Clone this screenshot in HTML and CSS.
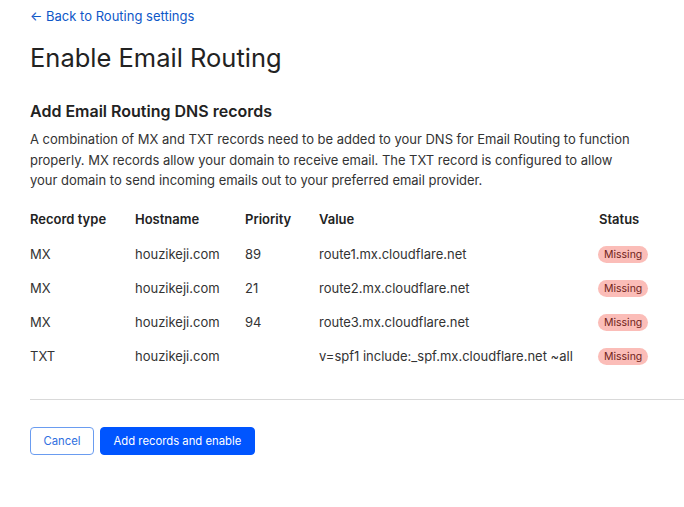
FILE: index.html
```html
<!DOCTYPE html>
<html lang="en">
<head>
<meta charset="utf-8">
<title>Enable Email Routing</title>
<link rel="stylesheet" href="styles.css">
</head>
<body>
<main class="page">
  <a class="back" href="#"><span class="arrow">←</span> Back to Routing settings</a>
  <h1 class="title">Enable Email Routing</h1>
  <h2 class="subtitle">Add Email Routing DNS records</h2>
  <p class="desc">A combination of MX and TXT records need to be added to your DNS for Email Routing to function properly. MX records allow your domain to receive email. The TXT record is configured to allow your domain to send incoming emails out to your preferred email provider.</p>
  <table class="records">
    <thead>
      <tr><th class="c-type">Record type</th><th class="c-host">Hostname</th><th class="c-prio">Priority</th><th class="c-val">Value</th><th class="c-status">Status</th></tr>
    </thead>
    <tbody>
      <tr><td>MX</td><td>houzikeji.com</td><td>89</td><td>route1.mx.cloudflare.net</td><td><span class="badge">Missing</span></td></tr>
      <tr><td>MX</td><td>houzikeji.com</td><td>21</td><td>route2.mx.cloudflare.net</td><td><span class="badge">Missing</span></td></tr>
      <tr><td>MX</td><td>houzikeji.com</td><td>94</td><td>route3.mx.cloudflare.net</td><td><span class="badge">Missing</span></td></tr>
      <tr><td>TXT</td><td>houzikeji.com</td><td></td><td>v=spf1 include:_spf.mx.cloudflare.net ~all</td><td><span class="badge">Missing</span></td></tr>
    </tbody>
  </table>
  <hr class="divider">
  <div class="actions">
    <button class="btn btn-outline">Cancel</button>
    <button class="btn btn-primary">Add records and enable</button>
  </div>
</main>
</body>
</html>
```
FILE: styles.css
```css
html, body {
  margin: 0;
  padding: 0;
  background: #fff;
}
body {
  font-family: "Inter", "Liberation Sans", sans-serif;
  color: #222;
}
.page {
  padding: 6px 0 0 30px;
}
.back {
  display: block;
  color: #0e57c8;
  text-decoration: none;
  font-size: 13px;
  line-height: 20px;
}
.title {
  margin: 16px 0 0;
  font-size: 25.5px;
  font-weight: 400;
  line-height: 32px;
  color: #222;
}
.subtitle {
  margin: 26px 0 0;
  font-size: 16px;
  font-weight: 600;
  line-height: 22px;
}
.desc {
  margin: 7px 0 0;
  font-size: 13px;
  line-height: 20.5px;
  max-width: 606px;
  letter-spacing: -0.02px;
  color: #333;
}
.records {
  margin-top: 10px;
  border-collapse: collapse;
  font-size: 13px;
}
.records th {
  text-align: left;
  font-weight: 600;
  padding: 0;
  height: 36px;
  vertical-align: middle;
}
.records td {
  padding: 0;
  height: 34px;
  vertical-align: middle;
  color: #333;
}
.c-type { width: 105px; }
.c-host { width: 110px; }
.c-prio { width: 74px; }
.c-val { width: 280px; }
.badge {
  display: inline-block;
  background: #fbbdb8;
  color: #6f1d19;
  font-size: 10.5px;
  line-height: 17px;
  padding: 0 6px;
  border-radius: 9px;
  margin-left: -1px;
}
.divider {
  margin: 26px 0 0;
  border: 0;
  border-top: 1px solid #d9d9d9;
}
.actions {
  display: flex;
  gap: 6px;
  margin-top: 27px;
}
.btn {
  font-family: inherit;
  font-size: 11.3px;
  height: 28px;
  border-radius: 4px;
  padding: 0 12.5px;
  cursor: pointer;
}
.btn-outline {
  background: #fff;
  color: #2f6fe0;
  border: 1px solid #6a9cf0;
}
.btn-primary {
  background: #0055ff;
  color: #fff;
  border: 1px solid #0055ff;
}
```
